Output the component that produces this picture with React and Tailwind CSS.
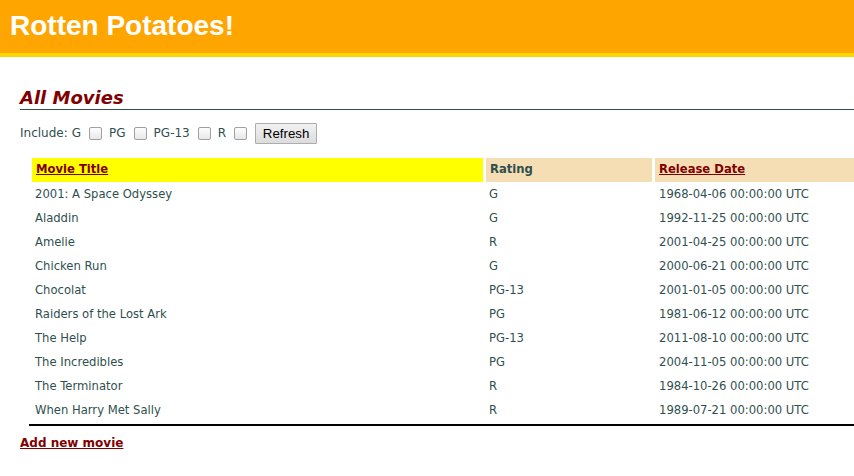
const movies = [
  { title: "2001: A Space Odyssey", rating: "G", date: "1968-04-06 00:00:00 UTC" },
  { title: "Aladdin", rating: "G", date: "1992-11-25 00:00:00 UTC" },
  { title: "Amelie", rating: "R", date: "2001-04-25 00:00:00 UTC" },
  { title: "Chicken Run", rating: "G", date: "2000-06-21 00:00:00 UTC" },
  { title: "Chocolat", rating: "PG-13", date: "2001-01-05 00:00:00 UTC" },
  { title: "Raiders of the Lost Ark", rating: "PG", date: "1981-06-12 00:00:00 UTC" },
  { title: "The Help", rating: "PG-13", date: "2011-08-10 00:00:00 UTC" },
  { title: "The Incredibles", rating: "PG", date: "2004-11-05 00:00:00 UTC" },
  { title: "The Terminator", rating: "R", date: "1984-10-26 00:00:00 UTC" },
  { title: "When Harry Met Sally", rating: "R", date: "1989-07-21 00:00:00 UTC" }
]

const ratings = ["G", "PG", "PG-13", "R"]

function Checkbox() {
  return (
    <span className="ml-[8px] mr-[7px] inline-block h-[13px] w-[13px] rounded-[2px] border border-[#a0a0a0] bg-gradient-to-b from-[#fdfdfd] to-[#e8e8e8]" />
  )
}

export default function App() {
  return (
    <div className="min-h-[476px] overflow-hidden bg-white font-['DejaVu_Sans',sans-serif] text-[#2f4f4f]">
      <header className="h-[57px] border-b-4 border-[#ffd700] bg-[#ffa500] px-[10px]">
        <h1 className="pt-[10px] font-['Liberation_Sans',sans-serif] text-[28px] font-bold leading-[32px] text-white">
          Rotten Potatoes!
        </h1>
      </header>

      <div className="pl-[20px]">
        <h2 className="mt-[30px] border-b border-[#2f4f4f] pb-[1px] text-[18px] font-bold italic leading-[21px] text-[#800000]">
          All Movies
        </h2>

        <form className="mt-[12px] flex h-[22px] items-center text-[12px]">
          <span className="mr-[4px]">Include:</span>
          {ratings.map((r) => (
            <label key={r} className="flex items-center">
              <span>{r}</span>
              <Checkbox />
            </label>
          ))}
          <button
            type="button"
            className="ml-[1px] h-[21px] w-[62px] rounded-[1px] border border-[#adadad] bg-gradient-to-b from-[#f2f2f2] to-[#dcdcdc] font-['Liberation_Sans',sans-serif] text-[13.3px] leading-[19px] text-black"
          >
            Refresh
          </button>
        </form>

        <div className="overflow-hidden">
          <table className="mt-[12px] ml-[9px] w-[860px] border-separate border-spacing-x-[3px] border-spacing-y-[2px] border-b-2 border-black text-[11.6px]">
            <thead>
              <tr className="h-[24px] text-left">
                <th className="w-[451px] bg-[#ffff00] px-[4px] font-bold">
                  <a className="text-[#800000] underline">Movie Title</a>
                </th>
                <th className="w-[166px] bg-[#f5deb3] px-[4px] font-bold">Rating</th>
                <th className="bg-[#f5deb3] px-[4px] font-bold">
                  <a className="text-[#800000] underline">Release Date</a>
                </th>
              </tr>
            </thead>
            <tbody>
              {movies.map((m) => (
                <tr key={m.title} className="h-[22px]">
                  <td className="px-[3px]">{m.title}</td>
                  <td className="px-[3px]">{m.rating}</td>
                  <td className="px-[4px]">{m.date}</td>
                </tr>
              ))}
            </tbody>
          </table>
        </div>

        <a className="mt-[8px] block text-[12px] font-bold text-[#800000] underline">Add new movie</a>
      </div>
    </div>
  )
}
